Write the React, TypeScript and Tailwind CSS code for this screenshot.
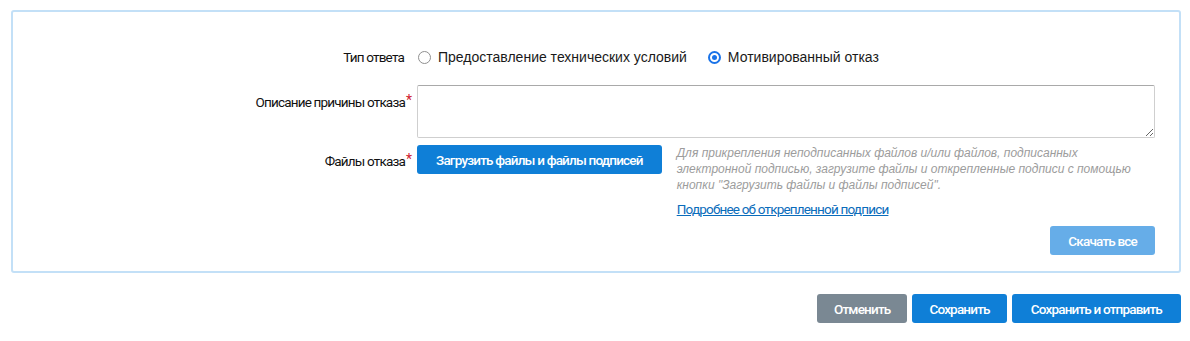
export default function App() {
  const cond = "font-['Roboto',sans-serif] text-[13.5px] tracking-[-0.06em]";
  return (
    <div className="min-h-[341px] bg-white pl-[11px] pr-[9px] pt-[10px]">
      <div className="rounded-[3px] border-2 border-[#c3e0f7] pr-[24px] pt-[35px] pb-[16px]">
        {/* Тип ответа */}
        <div className="flex items-center">
          <div className={`w-[392px] shrink-0 pr-px text-right text-[#111] ${cond}`}>
            Тип ответа
          </div>
          <div className="ml-[12px] flex h-[20px] items-center font-['Liberation_Sans',Arial,sans-serif] text-[14px] text-[#1a1a1a]">
            <label className="flex items-center">
              <span className="ml-px h-[13px] w-[13px] rounded-full border border-[#8f8f8f] bg-white"></span>
              <span className="ml-[7px]">Предоставление технических условий</span>
            </label>
            <label className="ml-[21px] flex items-center">
              <span className="flex h-[13px] w-[13px] items-center justify-center rounded-full border-2 border-[#1a73e8] bg-white">
                <span className="h-[5px] w-[5px] rounded-full bg-[#1a73e8]"></span>
              </span>
              <span className="ml-[7px]">Мотивированный отказ</span>
            </label>
          </div>
        </div>

        {/* Описание причины отказа */}
        <div className="mt-[18px] flex items-start">
          <div className={`w-[392px] shrink-0 pt-[7px] text-right text-[#111] ${cond}`}>
            <span className="relative">
              Описание причины отказа
              <span className="absolute -top-[4px] left-full pl-px text-[14px] text-[#d0202f]">*</span>
            </span>
          </div>
          <textarea className="ml-[12px] h-[53px] flex-1 rounded-[2px] border border-[#cfcfcf] border-t-[#a9a9a9] bg-white outline-none"></textarea>
        </div>

        {/* Файлы отказа */}
        <div className="mt-[7px] flex items-start">
          <div className={`w-[392px] shrink-0 pt-[6px] text-right text-[#111] ${cond}`}>
            <span className="relative">
              Файлы отказа
              <span className="absolute -top-[4px] left-full pl-px text-[14px] text-[#d0202f]">*</span>
            </span>
          </div>
          <div className="ml-[12px] flex flex-1 items-start">
            <button className={`h-[29px] shrink-0 rounded-[3px] bg-[#0f7fd7] px-[19px] font-medium text-white ${cond}`}>
              Загрузить файлы и файлы подписей
            </button>
            <div className="ml-[15px] flex flex-1 flex-col">
              <p className="w-[458px] font-['Liberation_Sans',Arial,sans-serif] text-[12px] leading-[16px] italic text-[#9c9c9c]">
                Для прикрепления неподписанных файлов и/или файлов, подписанных электронной подписью, загрузите файлы и открепленные подписи с помощью кнопки "Загрузить файлы и файлы подписей".
              </p>
              <a href="#" className={`mt-[8px] self-start leading-[16px] text-[#0a6cbb] underline ${cond}`}>
                Подробнее об открепленной подписи
              </a>
              <div className="mt-[9px] flex justify-end">
                <button className={`h-[29px] rounded-[3px] bg-[#66ade8] px-[18px] font-medium text-white ${cond}`}>
                  Скачать все
                </button>
              </div>
            </div>
          </div>
        </div>
      </div>

      <div className={`mt-[21px] flex justify-end gap-[5px] font-medium text-white ${cond}`}>
        <button className="h-[29px] rounded-[3px] bg-[#7a8893] px-[17px]">Отменить</button>
        <button className="h-[29px] rounded-[3px] bg-[#0f7fd7] px-[17px]">Сохранить</button>
        <button className="h-[29px] rounded-[3px] bg-[#0f7fd7] px-[19px]">Сохранить и отправить</button>
      </div>
    </div>
  );
}
